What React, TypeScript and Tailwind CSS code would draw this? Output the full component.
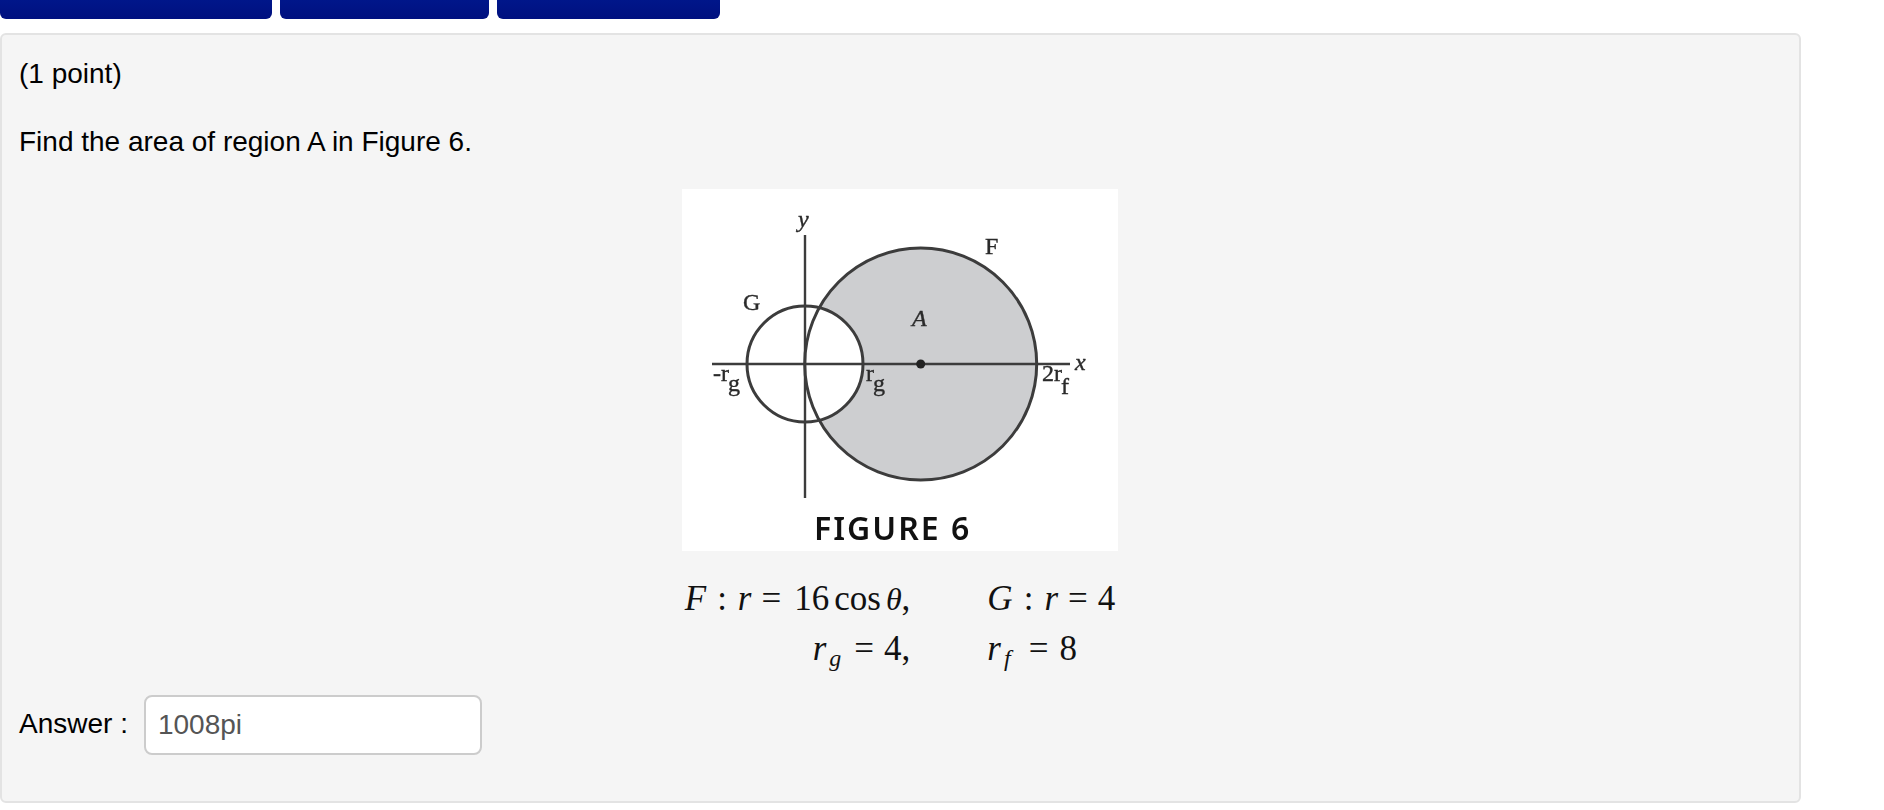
const sans = 'font-["Liberation_Sans",Arial,sans-serif]'

function Figure() {
  return (
    <svg width="436" height="362" viewBox="0 0 436 362" className="block bg-white">
      <g className="blur-[0.6px]">
        <circle cx="238.7" cy="175" r="116" fill="#cdced0" />
        <circle cx="123" cy="175" r="58" fill="#ffffff" />
        <line x1="123" y1="46" x2="123" y2="309" stroke="#3c3c3c" strokeWidth="2.4" />
        <line x1="30" y1="175" x2="388" y2="175" stroke="#3c3c3c" strokeWidth="2.4" />
        <circle cx="238.7" cy="175" r="116" fill="none" stroke="#3c3c3c" strokeWidth="3" />
        <circle cx="123" cy="175" r="58" fill="none" stroke="#3c3c3c" strokeWidth="3" />
        <circle cx="238.7" cy="175" r="4.5" fill="#222222" />
        <g fill="#2a2a2a" stroke="#2a2a2a" strokeWidth="0.4" fontFamily="'Liberation Serif', serif" fontSize="24">
          <text x="116" y="38" fontStyle="italic">y</text>
          <text x="61" y="121">G</text>
          <text x="303" y="65">F</text>
          <text x="230" y="137" fontStyle="italic">A</text>
          <text x="393" y="181" fontStyle="italic">x</text>
          <text x="31" y="192">-r</text>
          <text x="46" y="202">g</text>
          <text x="184" y="192">r</text>
          <text x="191" y="202">g</text>
          <text x="360" y="192">2r</text>
          <text x="379" y="205">f</text>
        </g>
        <text x="132" y="351" fill="#111111" fontFamily="'Noto Sans', sans-serif" fontSize="32" fontWeight="600" letterSpacing="2">
          FIGURE 6
        </text>
      </g>
    </svg>
  )
}

function Equations() {
  return (
    <div className='mt-[23px] grid grid-cols-[auto_auto] justify-center gap-x-[77px] font-["Liberation_Serif",serif] text-[35px] leading-[49px] text-[#111]'>
      <div className="text-right whitespace-nowrap">
        <i>F</i>
        <span className="mx-[11px]">:</span>
        <i>r</i>
        <span className="mx-[10px]">=</span>
        <span className="ml-[3px]">16</span>
        <span className="ml-[5px]">cos</span>
        <i className="ml-[5px] text-[32px]">θ</i>,
      </div>
      <div className="whitespace-nowrap">
        <i>G</i>
        <span className="mx-[11px]">:</span>
        <i>r</i>
        <span className="mx-[10px]">=</span>
        4
      </div>
      <div className="text-right whitespace-nowrap">
        <i>r</i>
        <sub className="ml-[3px] mr-[3px] text-[24px]">
          <i>g</i>
        </sub>
        <span className="mx-[10px]">=</span>
        4,
      </div>
      <div className="whitespace-nowrap">
        <i>r</i>
        <sub className="ml-[3px] mr-[8px] text-[24px]">
          <i>f</i>
        </sub>
        <span className="ml-[10px] mr-[11px]">=</span>
        8
      </div>
    </div>
  )
}

export default function App() {
  return (
    <div className={`min-h-[810px] bg-white text-black ${sans}`}>
      <div className="flex gap-2">
        <div className="h-[19px] w-[272px] rounded-b-md bg-gradient-to-b from-[#00168a] to-[#00107f]" />
        <div className="h-[19px] w-[209px] rounded-b-md bg-gradient-to-b from-[#00168a] to-[#00107f]" />
        <div className="h-[19px] w-[223px] rounded-b-md bg-gradient-to-b from-[#00168a] to-[#00107f]" />
      </div>
      <div className="mt-[14px] h-[770px] w-[1801px] rounded-md border-2 border-[#e3e3e3] bg-[#f5f5f5] pl-[17px] pr-[18px] pt-[19px] text-[28px] leading-[40px]">
        <p>(1 point)</p>
        <p className="mt-[28px]">Find the area of region A in Figure 6.</p>
        <div className="mt-[27px] flex justify-center">
          <Figure />
        </div>
        <Equations />
        <div className="mt-[22px] flex items-center gap-[16px]">
          <span className="pb-[2px]">Answer :</span>
          <input
            readOnly
            value="1008pi"
            className="h-[60px] w-[338px] rounded-lg border-2 border-[#cccccc] bg-white px-3 text-[28px] text-[#555555]"
          />
        </div>
      </div>
    </div>
  )
}
